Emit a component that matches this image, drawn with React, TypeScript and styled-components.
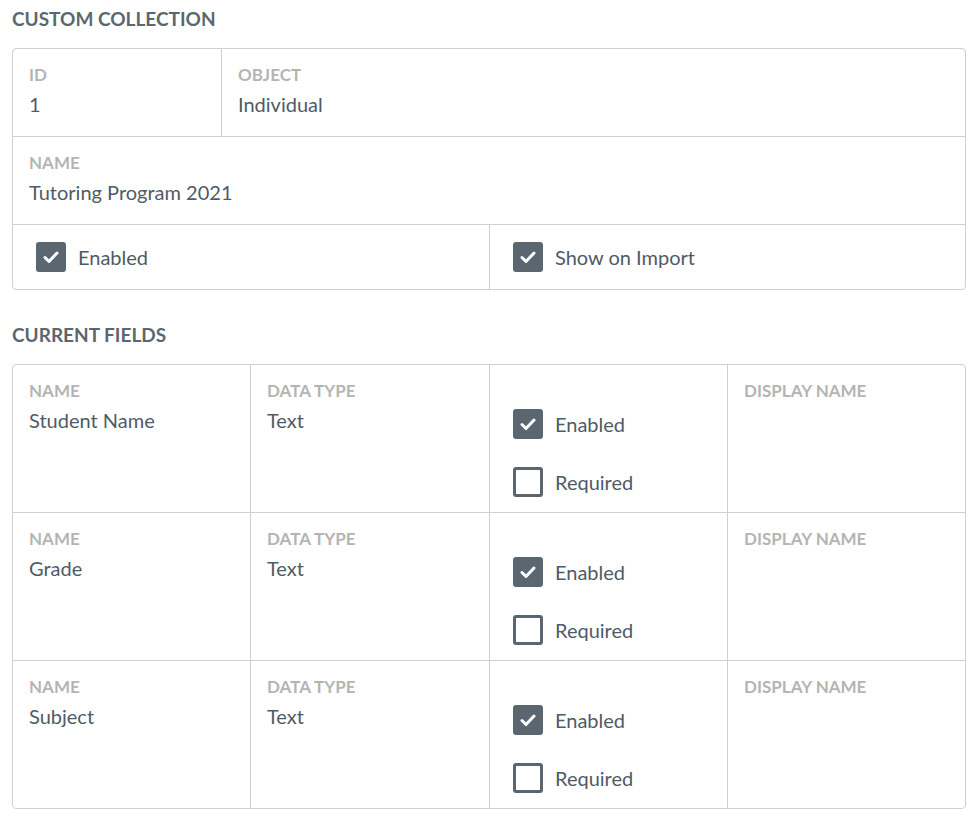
import React from 'react';
import styled, { createGlobalStyle } from 'styled-components';

const Global = createGlobalStyle`
  body { margin: 0; background: #fff; font-family: Lato, "Open Sans", sans-serif; }
`;

const Page = styled.div`
  padding: 4px 12px 0 12px;
  width: 954px;
`;

const Heading = styled.h2`
  margin: 0;
  height: 30px;
  line-height: 30px;
  font-size: 19px;
  font-weight: 700;
  color: #5b6770;
`;

const Card = styled.div<{ $mb?: number }>`
  border: 1px solid #cfcfcf;
  border-radius: 4px;
  margin: 14px 0 ${({ $mb }) => $mb ?? 0}px;
`;

const Row = styled.div<{ $cols: string; $h: number }>`
  display: grid;
  grid-template-columns: ${({ $cols }) => $cols};
  height: ${({ $h }) => $h}px;
  border-bottom: 1px solid #cfcfcf;
  &:last-child { border-bottom: none; }
`;

const Cell = styled.div`
  padding: 14px 16px;
  border-right: 1px solid #cfcfcf;
  &:last-child { border-right: none; }
`;

const CheckCell = styled(Cell)<{ $center?: boolean }>`
  display: flex;
  flex-direction: column;
  justify-content: ${({ $center }) => ($center ? 'center' : 'flex-start')};
  gap: 28px;
  padding: ${({ $center }) => ($center ? '0 23px' : '44px 23px 0')};
`;

const Label = styled.div`
  font-size: 17px;
  font-weight: 700;
  color: #b4b4b4;
  line-height: 24px;
`;

const Value = styled.div`
  font-size: 20px;
  color: #4f5b66;
  line-height: 30px;
  margin-top: 2px;
`;

const CheckRow = styled.label`
  display: flex;
  align-items: center;
  gap: 12px;
  font-size: 20px;
  color: #4f5b66;
  height: 30px;
`;

const Box = styled.span<{ $on: boolean }>`
  width: 30px;
  height: 30px;
  box-sizing: border-box;
  border-radius: 3px;
  border: 3px solid #5b6770;
  background: ${({ $on }) => ($on ? '#5b6770' : '#fff')};
  display: flex;
  align-items: center;
  justify-content: center;
`;

const Check = ({ on, label }: { on: boolean; label: string }) => (
  <CheckRow>
    <Box $on={on}>
      {on && (
        <svg width="16" height="14" viewBox="0 0 16 14">
          <path d="M2 7.5l4 4L14 3" fill="none" stroke="#fff" strokeWidth="3" strokeLinecap="round" strokeLinejoin="round" />
        </svg>
      )}
    </Box>
    {label}
  </CheckRow>
);

const fields = ['Student Name', 'Grade', 'Subject'];

export default function App() {
  return (
    <Page>
      <Global />
      <Heading>CUSTOM COLLECTION</Heading>
      <Card $mb={30}>
        <Row $cols="209px 1fr" $h={87}>
          <Cell><Label>ID</Label><Value>1</Value></Cell>
          <Cell><Label>OBJECT</Label><Value>Individual</Value></Cell>
        </Row>
        <Row $cols="1fr" $h={87}>
          <Cell><Label>NAME</Label><Value>Tutoring Program 2021</Value></Cell>
        </Row>
        <Row $cols="477px 1fr" $h={64}>
          <CheckCell $center><Check on label="Enabled" /></CheckCell>
          <CheckCell $center><Check on label="Show on Import" /></CheckCell>
        </Row>
      </Card>
      <Heading>CURRENT FIELDS</Heading>
      <Card>
        {fields.map((f) => (
          <Row key={f} $cols="238px 239px 238px 1fr" $h={147}>
            <Cell><Label>NAME</Label><Value>{f}</Value></Cell>
            <Cell><Label>DATA TYPE</Label><Value>Text</Value></Cell>
            <CheckCell>
              <Check on label="Enabled" />
              <Check on={false} label="Required" />
            </CheckCell>
            <Cell><Label>DISPLAY NAME</Label></Cell>
          </Row>
        ))}
      </Card>
    </Page>
  );
}
